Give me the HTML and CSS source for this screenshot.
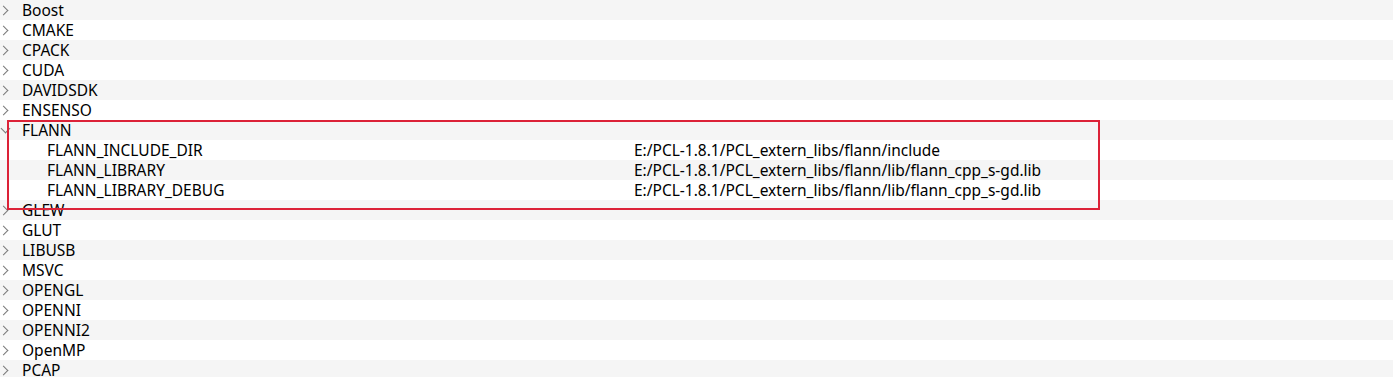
FILE: index.html
```html
<!DOCTYPE html>
<html lang="en">
<head>
    <meta charset="UTF-8">
    <title>CMake Entries</title>
    <link rel="stylesheet" href="styles.css">
</head>
<body>
    <div class="tree">
        <div class="row"><span class="arrow closed"></span><span class="name">Boost</span></div>
        <div class="row"><span class="arrow closed"></span><span class="name">CMAKE</span></div>
        <div class="row"><span class="arrow closed"></span><span class="name">CPACK</span></div>
        <div class="row"><span class="arrow closed"></span><span class="name">CUDA</span></div>
        <div class="row"><span class="arrow closed"></span><span class="name">DAVIDSDK</span></div>
        <div class="row"><span class="arrow closed"></span><span class="name">ENSENSO</span></div>
        <div class="row"><span class="arrow open"></span><span class="name">FLANN</span></div>
        <div class="row child"><span class="name">FLANN_INCLUDE_DIR</span><span class="value">E:/PCL-1.8.1/PCL_extern_libs/flann/include</span></div>
        <div class="row child"><span class="name">FLANN_LIBRARY</span><span class="value">E:/PCL-1.8.1/PCL_extern_libs/flann/lib/flann_cpp_s-gd.lib</span></div>
        <div class="row child"><span class="name">FLANN_LIBRARY_DEBUG</span><span class="value">E:/PCL-1.8.1/PCL_extern_libs/flann/lib/flann_cpp_s-gd.lib</span></div>
        <div class="row"><span class="arrow closed"></span><span class="name">GLEW</span></div>
        <div class="row"><span class="arrow closed"></span><span class="name">GLUT</span></div>
        <div class="row"><span class="arrow closed"></span><span class="name">LIBUSB</span></div>
        <div class="row"><span class="arrow closed"></span><span class="name">MSVC</span></div>
        <div class="row"><span class="arrow closed"></span><span class="name">OPENGL</span></div>
        <div class="row"><span class="arrow closed"></span><span class="name">OPENNI</span></div>
        <div class="row"><span class="arrow closed"></span><span class="name">OPENNI2</span></div>
        <div class="row"><span class="arrow closed"></span><span class="name">OpenMP</span></div>
        <div class="row"><span class="arrow closed"></span><span class="name">PCAP</span></div>
        <!-- annotation box drawn over the FLANN group -->
        <div class="highlight"></div>
    </div>
</body>
</html>
```

FILE: styles.css
```css
/* CMake cache tree view */
body {
    margin: 0;
    background-color: #fff;
    font-family: "Noto Sans", "Noto Sans CJK SC", sans-serif;
    font-size: 15.5px;
    color: #000;
}
.tree {
    position: relative;
}
.row {
    display: flex;
    align-items: center;
    height: 20px;
    line-height: 20px;
}
.row:nth-child(odd) {
    background-color: #f5f5f5;
}
.arrow {
    position: relative;
    width: 22px;
    height: 20px;
    flex-shrink: 0;
}
.arrow::before {
    content: "";
    position: absolute;
    width: 6px;
    height: 6px;
    border-right: 1.5px solid #7a7a7a;
    border-bottom: 1.5px solid #7a7a7a;
}
.arrow.closed::before {
    left: 0;
    top: 7px;
    transform: rotate(-45deg);
}
.arrow.open::before {
    left: 2px;
    top: 5px;
    transform: rotate(45deg);
}
.child .name {
    padding-left: 47px;
    width: 587px;
    flex-shrink: 0;
}
.highlight {
    position: absolute;
    left: 7px;
    top: 120px;
    width: 1089px;
    height: 86px;
    border: 2px solid #dc2238;
}
```
